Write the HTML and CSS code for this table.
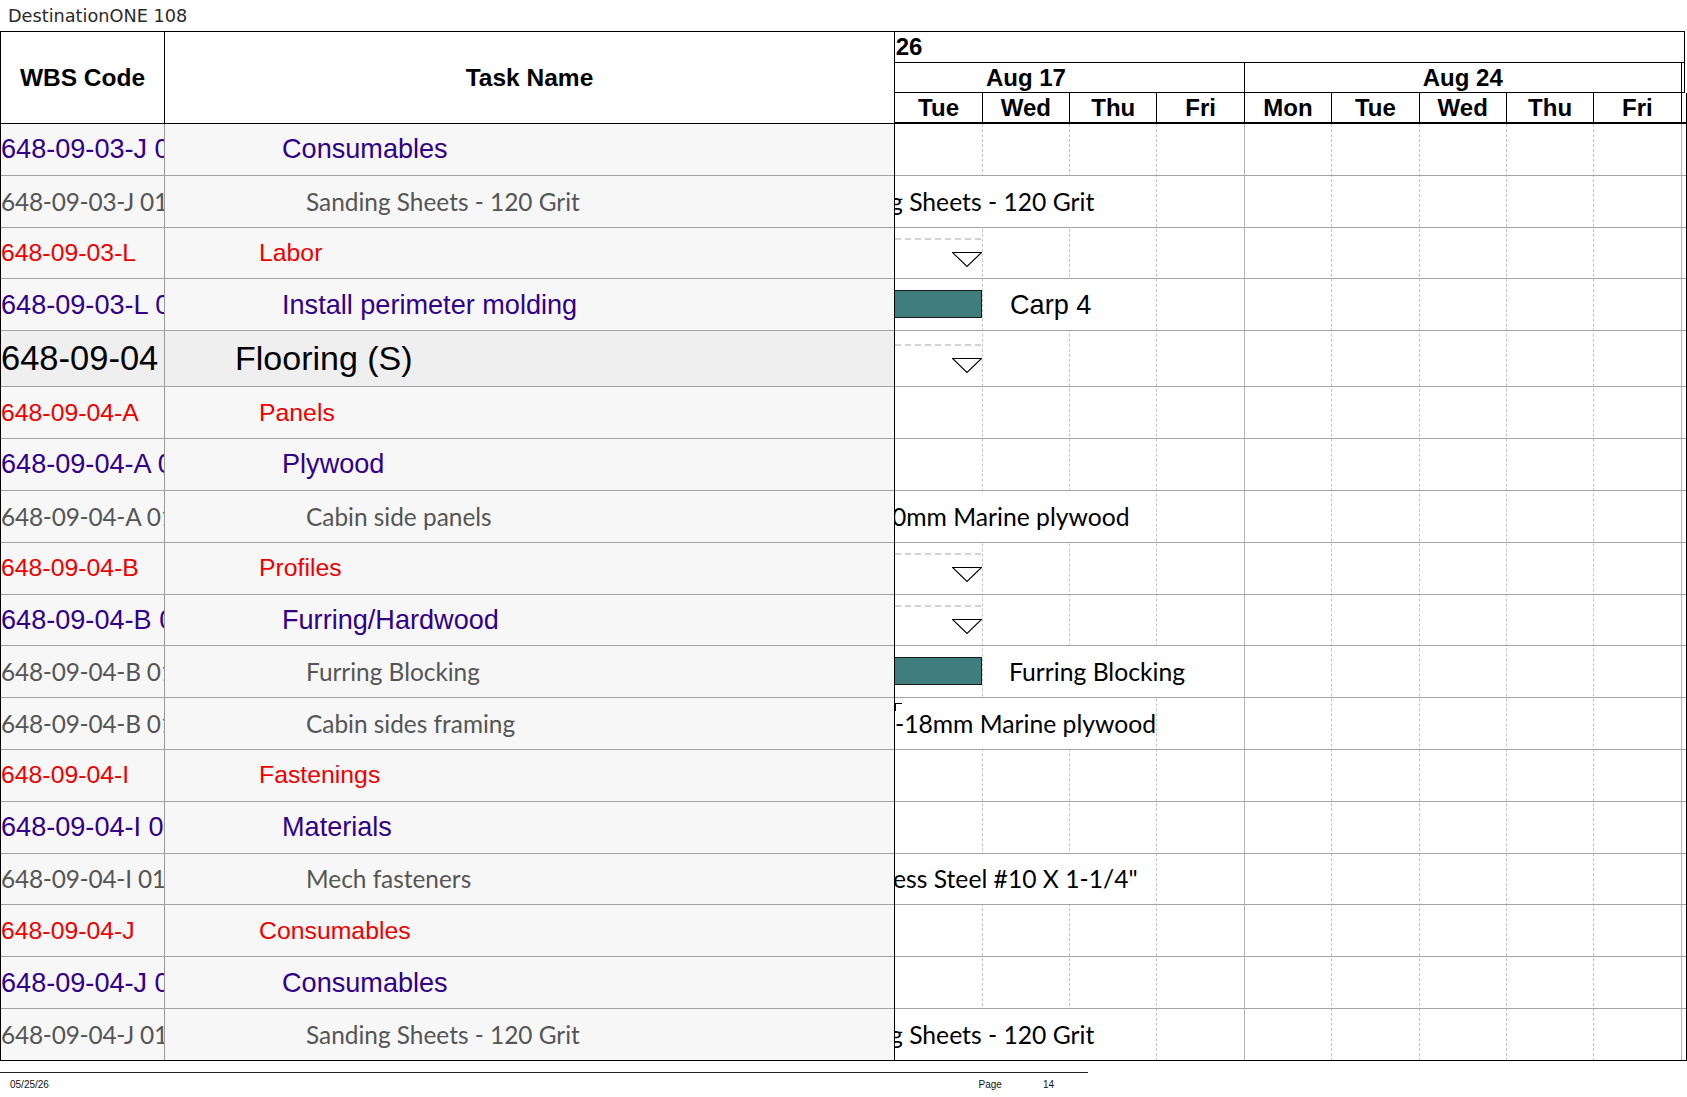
FILE: index.html
```html
<!DOCTYPE html>
<html>
<head>
<meta charset="utf-8">
<title>DestinationONE 108</title>
<link rel="stylesheet" href="styles.css">
</head>
<body>
<div class="title">DestinationONE 108</div>
<div class="chart">
  <div class="tbl">
    <div class="thead">
      <div class="th wbs">WBS Code</div>
      <div class="th task">Task Name</div>
    </div>
    <div class="tbody">
      <div class="row l2"><div class="code">648-09-03-J 01</div><div class="name">Consumables</div></div>
      <div class="row l3"><div class="code">648-09-03-J 01 01</div><div class="name">Sanding Sheets - 120 Grit</div></div>
      <div class="row l1"><div class="code">648-09-03-L</div><div class="name">Labor</div></div>
      <div class="row l2"><div class="code">648-09-03-L 01</div><div class="name">Install perimeter molding</div></div>
      <div class="row l0"><div class="code">648-09-04</div><div class="name">Flooring (S)</div></div>
      <div class="row l1"><div class="code">648-09-04-A</div><div class="name">Panels</div></div>
      <div class="row l2"><div class="code">648-09-04-A 01</div><div class="name">Plywood</div></div>
      <div class="row l3"><div class="code">648-09-04-A 01 01</div><div class="name">Cabin side panels</div></div>
      <div class="row l1"><div class="code">648-09-04-B</div><div class="name">Profiles</div></div>
      <div class="row l2"><div class="code">648-09-04-B 01</div><div class="name">Furring/Hardwood</div></div>
      <div class="row l3"><div class="code">648-09-04-B 01 01</div><div class="name">Furring Blocking</div></div>
      <div class="row l3"><div class="code">648-09-04-B 01 02</div><div class="name">Cabin sides framing</div></div>
      <div class="row l1"><div class="code">648-09-04-I</div><div class="name">Fastenings</div></div>
      <div class="row l2"><div class="code">648-09-04-I 01</div><div class="name">Materials</div></div>
      <div class="row l3"><div class="code">648-09-04-I 01 01</div><div class="name">Mech fasteners</div></div>
      <div class="row l1"><div class="code">648-09-04-J</div><div class="name">Consumables</div></div>
      <div class="row l2"><div class="code">648-09-04-J 01</div><div class="name">Consumables</div></div>
      <div class="row l3"><div class="code">648-09-04-J 01 01</div><div class="name">Sanding Sheets - 120 Grit</div></div>
    </div>
  </div>
  <div class="gantt">
    <div class="ghead">
      <div class="g-year"><span class="year">2026</span></div>
      <div class="g-weeks">
        <div class="track">
          <div class="wk">Aug 17</div>
          <div class="wk">Aug 24</div>
          <div class="wk"></div>
        </div>
      </div>
      <div class="g-days">
        <div class="track">
          <div class="day">Mon</div><div class="day">Tue</div><div class="day">Wed</div><div class="day">Thu</div><div class="day">Fri</div>
          <div class="day">Mon</div><div class="day">Tue</div><div class="day">Wed</div><div class="day">Thu</div><div class="day">Fri</div>
          <div class="day"></div>
        </div>
      </div>
    </div>
    <div class="gbody">
      <div class="gcols">
        <div class="col"></div><div class="col"></div><div class="col"></div><div class="col"></div><div class="col fri"></div>
        <div class="col"></div><div class="col"></div><div class="col"></div><div class="col"></div><div class="col fri"></div>
        <div class="col"></div>
      </div>
      <div class="grow"></div>
      <div class="grow">
        <div class="glbl cal clip5"><span class="pre">Sandin</span>g Sheets - 120 Grit</div>
      </div>
      <div class="grow">
        <div class="sumline"></div>
        <svg class="tri" width="30" height="15" viewBox="0 0 30 15"><polygon points="0.5,0.5 29.5,0.5 15,14.5" fill="#fff" stroke="#000" stroke-width="1.1"/></svg>
      </div>
      <div class="grow">
        <div class="bar"></div>
        <div class="glbl ari at115">Carp 4</div>
      </div>
      <div class="grow l0">
        <div class="sumline"></div>
        <svg class="tri" width="30" height="15" viewBox="0 0 30 15"><polygon points="0.5,0.5 29.5,0.5 15,14.5" fill="#fff" stroke="#000" stroke-width="1.1"/></svg>
      </div>
      <div class="grow"></div>
      <div class="grow"></div>
      <div class="grow">
        <div class="glbl cal clip3"><span class="pre">Cabin side panels 1</span>0mm Marine plywood</div>
      </div>
      <div class="grow">
        <div class="sumline"></div>
        <svg class="tri" width="30" height="15" viewBox="0 0 30 15"><polygon points="0.5,0.5 29.5,0.5 15,14.5" fill="#fff" stroke="#000" stroke-width="1.1"/></svg>
      </div>
      <div class="grow">
        <div class="sumline"></div>
        <svg class="tri" width="30" height="15" viewBox="0 0 30 15"><polygon points="0.5,0.5 29.5,0.5 15,14.5" fill="#fff" stroke="#000" stroke-width="1.1"/></svg>
      </div>
      <div class="grow">
        <div class="bar"></div>
        <div class="glbl cal at114">Furring Blocking</div>
      </div>
      <div class="grow">
        <div class="glbl cal clip0"><span class="pre">Cabin sides framing 1</span>-18mm Marine plywood</div>
        <div class="tick"></div>
      </div>
      <div class="grow"></div>
      <div class="grow"></div>
      <div class="grow">
        <div class="glbl cal clip2"><span class="pre">Stainl</span>ess Steel #10 X 1-1/4"</div>
      </div>
      <div class="grow"></div>
      <div class="grow"></div>
      <div class="grow">
        <div class="glbl cal clip5"><span class="pre">Sandin</span>g Sheets - 120 Grit</div>
      </div>
    </div>
  </div>
</div>
<div class="footer">
  <span class="date">05/25/26</span>
  <span class="pg"><span>Page</span><span>14</span></span>
</div>
</body>
</html>
```
FILE: styles.css
```css
html, body {
  margin: 0;
  padding: 0;
  background: #fff;
}

body {
  width: 1687px;
  font-family: "Liberation Sans", Arial, sans-serif;
  color: #000;
}

.title {
  height: 31px;
  line-height: 33px;
  padding-left: 8px;
  font-family: "DejaVu Sans", sans-serif;
  font-size: 17.7px;
  color: #2a2a2a;
  box-sizing: border-box;
}

.chart {
  display: flex;
  width: 1687px;
}

/* ---------- left table ---------- */
.tbl {
  width: 894px;
  flex: none;
  border-left: 1px solid #000;
  box-sizing: border-box;
}

.thead {
  display: flex;
  height: 93px;
  border-top: 1px solid #000;
  border-bottom: 1px solid #000;
  box-sizing: border-box;
  font-weight: bold;
  font-size: 24.5px;
  background: #fff;
}

.th {
  display: flex;
  align-items: center;
  justify-content: center;
}

.th.wbs {
  width: 164px;
  flex: none;
  border-right: 1px solid #000;
  box-sizing: border-box;
}

.th.task {
  flex: 1;
}

.row {
  display: flex;
  height: 51.82px;
  border-bottom: 1px solid #a4a4a4;
  box-sizing: border-box;
  background: #f7f7f7;
}

.row:last-child {
  border-bottom-color: #000;
}

.code {
  width: 164px;
  flex: none;
  border-right: 1px solid #999;
  box-sizing: border-box;
  overflow: hidden;
  white-space: nowrap;
  display: flex;
  align-items: center;
}

.name {
  flex: 1;
  min-width: 0;
  display: flex;
  align-items: center;
  white-space: nowrap;
  overflow: hidden;
}

.row.l0 {
  height: 56px;
  background: #efefef;
  color: #000;
  font-size: 34px;
}
.row.l0 .code { font-size: 34.5px; }
.row.l0 .name { padding-left: 70px; }

.row.l1 {
  color: #ee0000;
  font-size: 24.8px;
}
.row.l1 .name { padding-left: 94px; }

.row.l2 {
  color: #330088;
  font-size: 27.1px;
}
.row.l2 .name { padding-left: 117px; }

.row.l3 {
  color: #555;
  font-family: Lato, "Liberation Sans", sans-serif;
  font-size: 24.4px;
}
.row.l3 .code { letter-spacing: -0.2px; }
.row.l3 .name { padding-left: 141px; }

/* ---------- gantt ---------- */
.gantt {
  width: 793px;
  flex: none;
  border-left: 1px solid #000;
  box-sizing: border-box;
  overflow: hidden;
}

.ghead {
  height: 93px;
  font-weight: bold;
  font-size: 24px;
  white-space: nowrap;
}

.g-year {
  height: 32px;
  border-top: 1px solid #000;
  border-bottom: 1px solid #000;
  border-right: 1px solid #000;
  margin-right: 2px;
  box-sizing: border-box;
  overflow: hidden;
  line-height: 30px;
}

.year {
  display: inline-block;
  margin-left: -26px;
}

.g-weeks {
  height: 30px;
  border-bottom: 1px solid #000;
  border-right: 1px solid #000;
  margin-right: 2px;
  box-sizing: border-box;
  overflow: hidden;
}

.g-days {
  height: 31px;
  border-bottom: 2px solid #000;
  border-right: 1px solid #000;
  box-sizing: border-box;
  overflow: hidden;
}

.track {
  display: flex;
  margin-left: -87px;
  height: 100%;
}

.wk {
  flex: 0 0 436.85px;
  border-right: 1px solid #000;
  box-sizing: border-box;
  text-align: center;
  line-height: 29px;
}

.day {
  flex: 0 0 87.37px;
  border-right: 1px solid #000;
  box-sizing: border-box;
  text-align: center;
  line-height: 29px;
}

.gbody {
  position: relative;
  border-right: 1px solid #000;
  overflow: hidden;
  background: #fff;
}

.gcols {
  position: absolute;
  top: 0;
  bottom: 0;
  left: -87px;
  display: flex;
}

.col {
  flex: 0 0 87.37px;
  border-right: 1px dashed #c4c4c4;
  box-sizing: border-box;
}

.col.fri {
  border-right: 1px solid #b6b6b6;
}

.grow {
  position: relative;
  height: 51.82px;
  border-bottom: 1px solid #a4a4a4;
  box-sizing: border-box;
}

.grow.l0 {
  height: 56px;
}

.grow:last-child {
  border-bottom-color: #000;
}

.glbl {
  position: absolute;
  top: 0;
  bottom: 0;
  display: flex;
  align-items: center;
  white-space: nowrap;
  background: #fff;
  color: #000;
}

.glbl .pre {
  position: absolute;
  right: 100%;
}

.glbl.cal {
  font-family: Lato, "Liberation Sans", sans-serif;
  font-size: 24.7px;
}

.glbl.ari {
  font-size: 27.1px;
}

.clip5 { left: -5px; }
.clip3 { left: -3px; }
.clip2 { left: -2px; }
.clip0 { left: 0; }
.at115 { left: 115px; }
.at114 { left: 114px; }

.bar {
  position: absolute;
  left: -20px;
  width: 106.7px;
  top: calc(50% - 15px);
  height: 28px;
  background: #3f7e7c;
  border: 1px solid #1a1a1a;
  box-sizing: border-box;
}

.sumline {
  position: absolute;
  left: -10px;
  width: 96px;
  top: calc(50% - 15px);
  border-top: 2px dashed #d2d2d2;
}

.tri {
  position: absolute;
  left: 57px;
  top: calc(50% - 1px);
  display: block;
}

.tick {
  position: absolute;
  left: 0;
  top: 5px;
  width: 6px;
  height: 7px;
  border-top: 1px solid #000;
  border-left: 1px solid #000;
}

/* ---------- footer ---------- */
.footer {
  width: 1088px;
  margin-top: 11px;
  border-top: 1px solid #222;
  display: flex;
  padding: 6px 0 0 10px;
  box-sizing: border-box;
  font-size: 10px;
  color: #111;
}

.pg {
  margin-left: auto;
  margin-right: 34px;
  display: flex;
  gap: 41px;
}
```
